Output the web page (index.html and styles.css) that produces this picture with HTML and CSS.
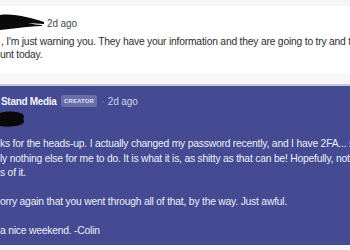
FILE: index.html
```html
<!DOCTYPE html>
<html>
<head>
<meta charset="utf-8">
<link rel="stylesheet" href="styles.css">
</head>
<body>
<div class="page">
  <div class="top-gap"></div>
  <div class="card">
    <div class="meta">
      <svg class="scribble1" width="46" height="18" viewBox="0 0 46 18">
        <path d="M0 2 C8 1 18 2 26 4 C32 5 38 7 44 9 L44 11 C38 11 33 10 28 10 C33 11 38 12 42 12 L42 13 C34 13 26 14 18 15 C12 16 6 16 0 17 Z" fill="#0a0a0a"/>
      </svg>
      <span class="time">2d ago</span>
    </div>
    <div class="text">
      <p>, I'm just warning you. They have your information and they are going to try and take over your</p>
      <p>unt today.</p>
    </div>
  </div>
  <div class="gap"></div>
  <div class="reply">
    <div class="meta meta-reply">
      <span class="name">Stand Media</span>
      <span class="badge">CREATOR</span>
      <span class="dot">·</span>
      <span class="time time-reply">2d ago</span>
    </div>
    <svg class="scribble2" width="26" height="18" viewBox="0 0 26 18">
      <path d="M0 3 C6 1 14 1 20 3 C24 4 25 7 23 9 C25 11 24 14 20 15 C13 17 6 17 0 16 Z" fill="#0a0a0a"/>
    </svg>
    <div class="text text-reply">
      <p>ks for the heads-up. I actually changed my password recently, and I have 2FA... so there's</p>
      <p>ly nothing else for me to do. It is what it is, as shitty as that can be! Hopefully, nothing</p>
      <p>s of it.</p>
      <p class="blank">&nbsp;</p>
      <p>orry again that you went through all of that, by the way. Just awful.</p>
      <p class="blank">&nbsp;</p>
      <p>a nice weekend. -Colin</p>
    </div>
  </div>
  <div class="bottom"></div>
</div>
</body>
</html>
```
FILE: styles.css
```css
html, body {
  margin: 0;
  padding: 0;
}
body {
  width: 350px;
  height: 250px;
  overflow: hidden;
  background: #f6f6f8;
  font-family: "Liberation Sans", Arial, sans-serif;
}
.page {
  display: flex;
  flex-direction: column;
  width: 350px;
  overflow: hidden;
}
.top-gap {
  height: 6px;
  background: #f5f5f7;
}
.card {
  background: #ffffff;
  height: 67px;
  padding-top: 7px;
  box-sizing: border-box;
}
.meta {
  display: flex;
  align-items: center;
  height: 18px;
  white-space: nowrap;
}
.scribble1 {
  display: block;
  flex: none;
}
.time {
  font-size: 10px;
  letter-spacing: -0.1px;
  color: #4a4a4a;
  margin-left: 1px;
  margin-top: 2px;
}
.text p {
  margin: 0;
  white-space: nowrap;
  font-size: 10.3px;
  letter-spacing: -0.2px;
  line-height: 13px;
  color: #2e2e33;
}
.card .text {
  padding-top: 4px;
}
.card .text p:first-child {
  padding-left: 1px;
}
.gap {
  height: 11px;
  background: #f8f7fa;
  border-bottom: 2px solid #c9c8d6;
}
.reply {
  background: #444b93;
  height: 159px;
  padding-top: 8px;
  box-sizing: border-box;
}
.meta-reply {
  height: 14px;
}
.name {
  font-size: 10px;
  font-weight: bold;
  letter-spacing: -0.3px;
  color: #f2f2f8;
  padding-left: 1px;
}
.badge {
  margin-left: 4px;
  background: #6a6fac;
  color: #dfe0f0;
  font-size: 6px;
  font-weight: bold;
  letter-spacing: 0.1px;
  height: 12px;
  line-height: 12px;
  padding: 0 3.5px;
  border-radius: 2px;
}
.dot {
  color: #9a9dcc;
  font-size: 10px;
  margin: 0 3px 0 4px;
}
.time-reply {
  color: #d0d2ec;
  margin: 0;
}
.scribble2 {
  display: block;
  margin-top: 2px;
}
.text-reply {
  padding-top: 9px;
}
.text-reply p {
  color: #eeeef7;
  line-height: 14.5px;
}
.bottom {
  height: 5px;
  background: #f6f6f8;
}
```
